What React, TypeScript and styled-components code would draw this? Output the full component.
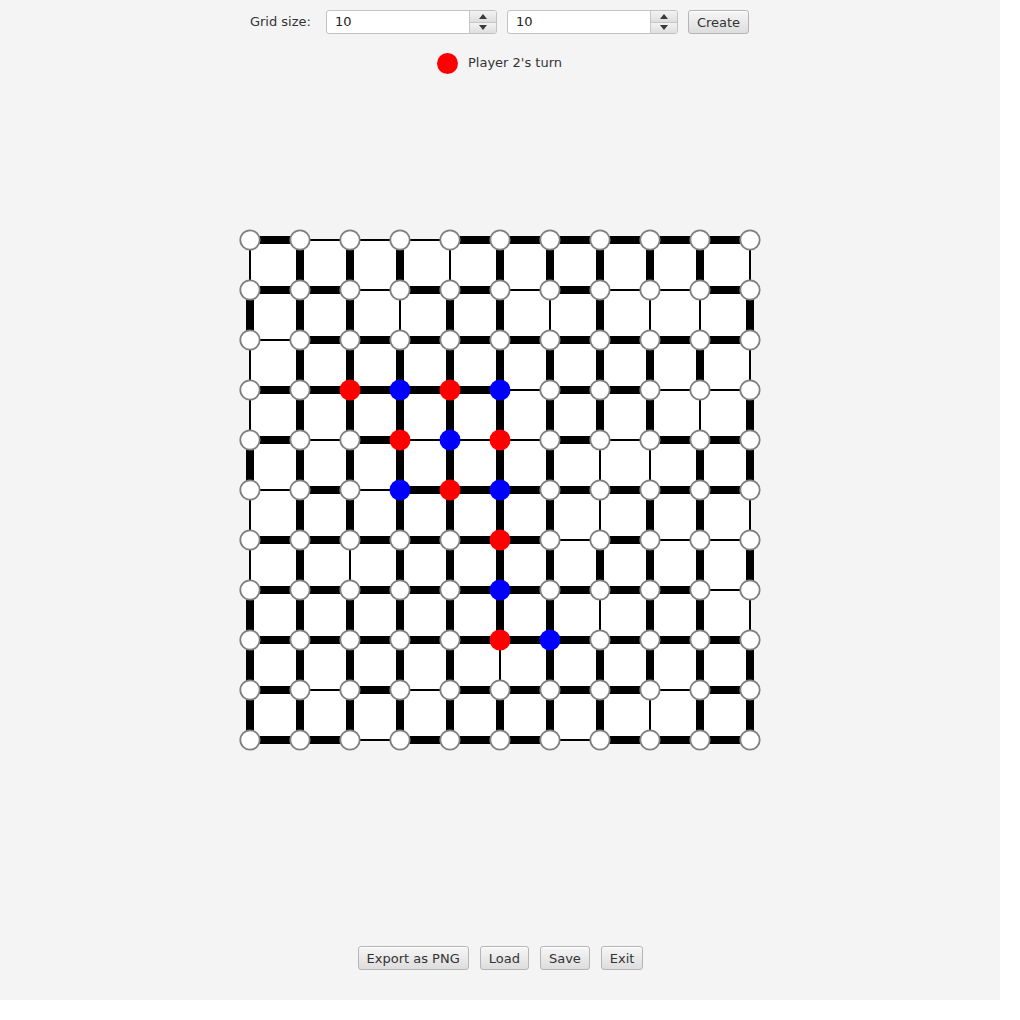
import React from "react";
import styled, { createGlobalStyle } from "styled-components";

const GlobalStyle = createGlobalStyle`
  html, body { margin: 0; padding: 0; background: #ffffff; }
  body { font-family: "DejaVu Sans", "Liberation Sans", sans-serif; }
`;

const Window = styled.div`
  width: 1000px;
  height: 1000px;
  background: #f4f4f4;
  display: flex;
  flex-direction: column;
  align-items: center;
  font-family: "DejaVu Sans", "Liberation Sans", sans-serif;
  font-size: 13px;
  color: #333333;
`;

const Toolbar = styled.div`
  margin-top: 10px;
  height: 24px;
  display: flex;
  align-items: center;
  gap: 10px;
  margin-right: 1px;
`;

const Label = styled.span`
  margin-right: 5px;
  line-height: 24px;
`;

const Spinner = styled.div`
  width: 169px;
  height: 22px;
  display: flex;
  border: 1px solid #c2c2c2;
  border-radius: 3px;
  background: #ffffff;
  overflow: hidden;
`;

const SpinnerText = styled.div`
  flex: 1;
  padding-left: 8px;
  line-height: 22px;
  color: #222;
`;

const ArrowCol = styled.div`
  width: 26px;
  display: flex;
  flex-direction: column;
  border-left: 1px solid #c6c6c6;
`;

const ArrowBtn = styled.div<{ $top?: boolean }>`
  flex: 1;
  display: flex;
  align-items: center;
  justify-content: center;
  background: linear-gradient(#f3f3f3, #dedede);
  border-top: ${(p) => (p.$top ? "none" : "1px solid #c6c6c6")};
`;

const Button = styled.button`
  font-family: "DejaVu Sans", "Liberation Sans", sans-serif;
  font-size: 13px;
  color: #333333;
  height: 24px;
  padding: 0 8px;
  border: 1px solid #b5b5b5;
  border-radius: 3px;
  background: linear-gradient(#f6f6f6, #dddddd);
  box-shadow: inset 0 1px 0 #ffffff;
  display: flex;
  align-items: center;
  justify-content: center;
  cursor: default;
`;

const TurnRow = styled.div`
  margin-top: 18px;
  height: 22px;
  display: flex;
  align-items: center;
  gap: 10px;
  margin-right: 1px;
`;

const Dot = styled.span<{ $color: string }>`
  width: 21px;
  height: 21px;
  border-radius: 50%;
  background: ${(p) => p.$color};
`;

const TurnText = styled.span`
  line-height: 20px;
`;

const BoardWrap = styled.div`
  margin-top: 155px;
  width: 522px;
  height: 522px;
`;

const Footer = styled.div`
  margin-top: auto;
  margin-bottom: 30px;
  display: flex;
  gap: 11px;
  margin-left: 1px;
`;

const H = [
  "1000111111",
  "1101101001",
  "0111111111",
  "1111101100",
  "1010001011",
  "0101111111",
  "1111110100",
  "1111111110",
  "1111111111",
  "1010111101",
  "1101110111",
];

const V = [
  "01110111110",
  "11101101001",
  "01111111110",
  "01111111101",
  "11111110011",
  "01111110110",
  "01011111111",
  "11111110110",
  "11111011111",
  "11111111011",
];

const COLORED: Record<string, string> = {
  "2,3": "#ff0000",
  "3,3": "#0000ff",
  "4,3": "#ff0000",
  "5,3": "#0000ff",
  "3,4": "#ff0000",
  "4,4": "#0000ff",
  "5,4": "#ff0000",
  "3,5": "#0000ff",
  "4,5": "#ff0000",
  "5,5": "#0000ff",
  "5,6": "#ff0000",
  "5,7": "#0000ff",
  "5,8": "#ff0000",
  "6,8": "#0000ff",
};

const O = 11;
const S = 50;

function Board() {
  const lines: React.ReactNode[] = [];
  H.forEach((row, r) => {
    row.split("").forEach((ch, c) => {
      lines.push(
        <line
          key={`h${r}-${c}`}
          x1={O + c * S}
          y1={O + r * S}
          x2={O + (c + 1) * S}
          y2={O + r * S}
          stroke="#000"
          strokeWidth={ch === "1" ? 8 : 2}
        />
      );
    });
  });
  V.forEach((row, r) => {
    row.split("").forEach((ch, c) => {
      lines.push(
        <line
          key={`v${r}-${c}`}
          x1={O + c * S}
          y1={O + r * S}
          x2={O + c * S}
          y2={O + (r + 1) * S}
          stroke="#000"
          strokeWidth={ch === "1" ? 8 : 2}
        />
      );
    });
  });
  const nodes: React.ReactNode[] = [];
  for (let r = 0; r <= 10; r++) {
    for (let c = 0; c <= 10; c++) {
      const col = COLORED[`${c},${r}`];
      nodes.push(
        <circle
          key={`n${r}-${c}`}
          cx={O + c * S}
          cy={O + r * S}
          r={col ? 10.5 : 9.7}
          fill={col ?? "#ffffff"}
          stroke={col ? "none" : "#808080"}
          strokeWidth={col ? 0 : 1.8}
        />
      );
    }
  }
  return (
    <svg width={522} height={522} viewBox="0 0 522 522">
      <rect x={O} y={O} width={500} height={500} fill="#ffffff" />
      {lines}
      {nodes}
    </svg>
  );
}

const Up = () => (
  <svg width="8" height="5" viewBox="0 0 8 5">
    <polygon points="4,0 8,5 0,5" fill="#3a3a3a" />
  </svg>
);
const Down = () => (
  <svg width="8" height="5" viewBox="0 0 8 5">
    <polygon points="0,0 8,0 4,5" fill="#3a3a3a" />
  </svg>
);

function NumberSpinner({ value }: { value: string }) {
  return (
    <Spinner>
      <SpinnerText>{value}</SpinnerText>
      <ArrowCol>
        <ArrowBtn $top>
          <Up />
        </ArrowBtn>
        <ArrowBtn>
          <Down />
        </ArrowBtn>
      </ArrowCol>
    </Spinner>
  );
}

export default function App() {
  return (
    <>
      <GlobalStyle />
      <Window>
        <Toolbar>
          <Label>Grid size:</Label>
          <NumberSpinner value="10" />
          <NumberSpinner value="10" />
          <Button>Create</Button>
        </Toolbar>
        <TurnRow>
          <Dot $color="#ff0000" />
          <TurnText>Player 2's turn</TurnText>
        </TurnRow>
        <BoardWrap>
          <Board />
        </BoardWrap>
        <Footer>
          <Button>Export as PNG</Button>
          <Button>Load</Button>
          <Button>Save</Button>
          <Button>Exit</Button>
        </Footer>
      </Window>
    </>
  );
}
